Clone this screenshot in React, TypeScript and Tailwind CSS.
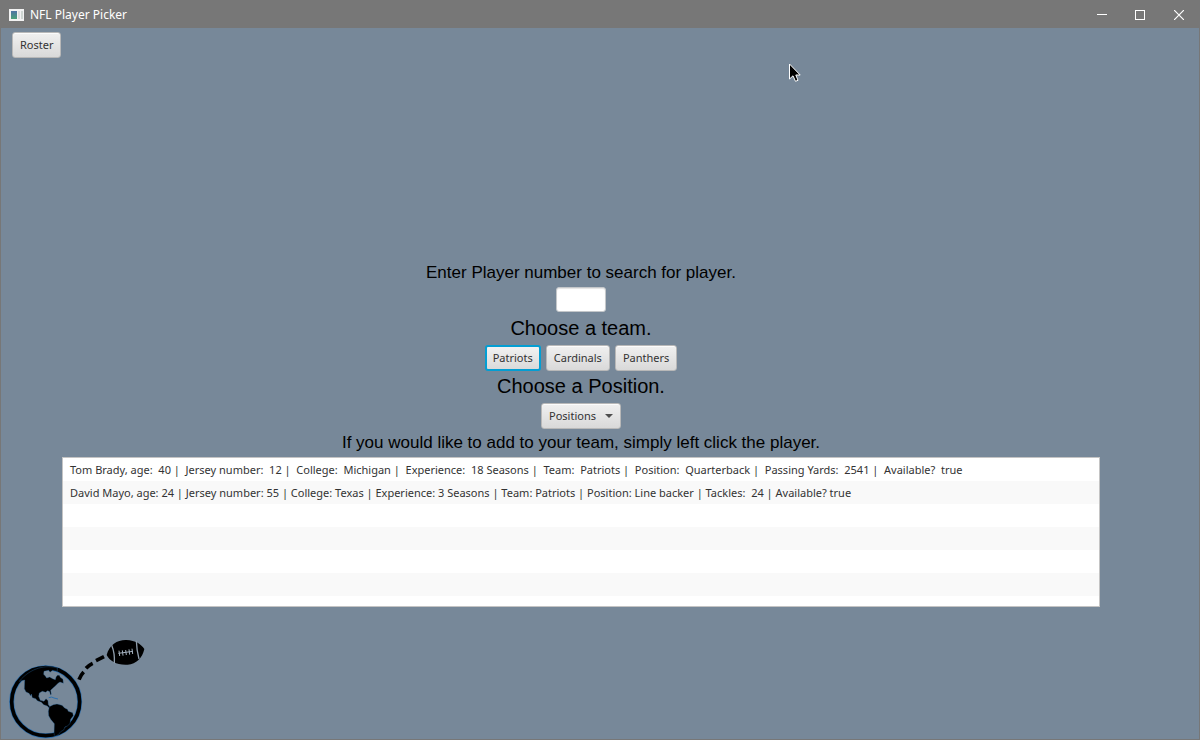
import { useState } from "react";

const teams = ["Patriots", "Cardinals", "Panthers"];

const players = [
  "Tom Brady, age:  40 |  Jersey number:  12 |  College:  Michigan |  Experience:  18 Seasons |  Team:  Patriots |  Position:  Quarterback |  Passing Yards:  2541 |  Available?  true",
  "David Mayo, age: 24 | Jersey number: 55 | College: Texas | Experience: 3 Seasons | Team: Patriots | Position: Line backer | Tackles:  24 | Available? true",
];

const rows = [...players, "", "", "", "", ""];

const control =
  "h-[26px] rounded-[3px] border border-[#b8b8b8] bg-linear-to-b from-[#f0f0f0] to-[#d9d9d9] px-[7px] text-[11px] leading-4 text-[#333333] shadow-[inset_0_1px_0_#fbfbfb]";
const focused =
  "h-[26px] rounded-[3px] border-2 border-[#039ed3] bg-linear-to-b from-[#f2f2f2] to-[#dadada] px-[6px] text-[11px] leading-4 text-[#333333]";

function TitleBar() {
  return (
    <header className="flex h-[27px] items-center bg-[#777777] pl-2 text-white">
      <svg className="mr-[6px] h-3 w-[15px]" viewBox="0 0 15 12" aria-hidden="true">
        <defs>
          <linearGradient id="pane" x1="0" y1="0" x2="0" y2="1">
            <stop offset="0" stopColor="#4f73a5" />
            <stop offset="1" stopColor="#4aa177" />
          </linearGradient>
        </defs>
        <rect width="15" height="12" fill="#f2f2f2" />
        <rect x="2" y="2" width="6" height="8" fill="url(#pane)" />
        <rect x="9" y="2" width="2" height="8" fill="#dcdcdc" />
        <rect x="12" y="2" width="2" height="8" fill="#cfd6d2" />
      </svg>
      <h1 className="flex-1 font-['Noto_Sans','Open_Sans',sans-serif] text-xs">NFL Player Picker</h1>
      <button aria-label="Minimize" className="flex h-full w-[38px] items-center justify-center">
        <svg className="size-[10px]" viewBox="0 0 10 10" shapeRendering="crispEdges">
          <path d="M0 4.5H10" stroke="white" />
        </svg>
      </button>
      <button aria-label="Maximize" className="flex h-full w-[38px] items-center justify-center">
        <svg className="size-[10px]" viewBox="0 0 10 10" shapeRendering="crispEdges">
          <path d="M.5 .5H9.500V9.500H.5Z" fill="none" stroke="white" />
        </svg>
      </button>
      <button aria-label="Close" className="flex h-full w-[40px] items-center justify-center">
        <svg className="size-[10px]" viewBox="0 0 10 10">
          <path d="M0 0L10 10M10 0L0 10" stroke="white" strokeWidth="1.200" />
        </svg>
      </button>
    </header>
  );
}

function GlobeLogo() {
  return (
    <svg className="h-[109px] w-[159px]" viewBox="3 0 477 327" role="img" aria-label="Globe and football">
      <g stroke="#2c6fae" strokeWidth="1" strokeLinejoin="round">
        <circle cx="137" cy="215" r="102" fill="none" stroke="#2c6fae" strokeWidth="15" />
        <circle cx="137" cy="215" r="102" fill="none" stroke="black" strokeWidth="11" />
        <path
          d="M58 154L74 150L73 176L78 186L87 190L92 198L94 192L97 203L107 206L112 212L124 217L131 224L142 228L148 235L153 233L145 224L144 212L138 206L132 214L121 211L116 199L118 189L127 184L137 187L143 182L149 185L151 194L154 193L152 181L160 173L166 168L174 160L180 156L190 160L189 148L181 142L178 136L172 136L168 141L166 149L158 146L149 141L140 144L136 138L131 133L132 124L146 121L150 127L158 121L172 124L172 114C140 104 92 112 58 154Z"
          fill="black"
        />
        <path
          d="M148 230L160 224L171 222L186 226L194 234L202 238L205 244L218 248L220 257L212 268L210 281L202 288L195 291L191 300L182 305L176 313L167 318L162 314L163 281L152 268L146 257L145 244Z"
          fill="black"
        />
        <path d="M146 203Q156 199 162 204L174 207" fill="none" strokeWidth="3" />
      </g>
      <path d="M237 149Q243 134 251 126M258 115Q267 105 278 100M288 92L312 80" fill="none" stroke="black" strokeWidth="11" />
      <path d="M320 75C328 44 353 29 379 30C407 31 424 43 433 57C427 84 409 102 383 104C351 106 329 93 320 75Z" fill="black" />
      <path d="M335 46Q345 70 343 100M409 32Q410 61 417 87" fill="none" stroke="#8f9dab" strokeWidth="4" />
      <path d="M355 70L399 64M357 62L359 78M367 61L369 77M377 60L379 75M387 58L389 74M396 56L398 72" fill="none" stroke="#a3b0bd" strokeWidth="3" />
    </svg>
  );
}

export default function App() {
  const [team, setTeam] = useState("Patriots");
  return (
    <div className="relative flex min-h-screen flex-col border border-[#777777] bg-[#778899] font-['Noto_Sans','Open_Sans',sans-serif]">
      <TitleBar />
      <nav className="flex px-[11px] pt-1">
        <button className={control}>Roster</button>
      </nav>

      <main className="mr-[99px] ml-[61px] flex flex-1 flex-col items-center justify-end pb-[23px] font-['Liberation_Sans',Arial,sans-serif] text-black">
        <label htmlFor="number" className="mb-[3px] text-[17px] leading-[22px]">
          Enter Player number to search for player.
        </label>
        <input
          id="number"
          className="h-[25px] w-[50px] rounded-[3px] border border-[#c4c7ca] bg-white px-[6px] text-[11px] shadow-[inset_0_1px_1px_#e4e4e4]"
        />
        <h2 className="mt-1 mb-1 text-xl leading-[25px]">Choose a team.</h2>
        <div className="flex gap-[5px] font-['Noto_Sans','Open_Sans',sans-serif]">
          {teams.map((name) => (
            <button
              key={name}
              aria-pressed={team === name}
              onClick={() => setTeam(name)}
              className={team === name ? focused : control}
            >
              {name}
            </button>
          ))}
        </div>
        <label htmlFor="position" className="mt-[3px] mb-1 text-xl leading-[25px]">
          Choose a Position.
        </label>
        <div className="relative flex font-['Noto_Sans','Open_Sans',sans-serif]">
          <select id="position" className={`${control} w-20 appearance-none`}>
            <option>Positions</option>
            <option>Quarterback</option>
            <option>Line backer</option>
          </select>
          <svg className="pointer-events-none absolute top-[11px] right-2 h-1 w-2" viewBox="0 0 8 4" aria-hidden="true">
            <path d="M0 0H8L4 4Z" fill="#4d4d4d" />
          </svg>
        </div>
        <h2 className="my-[3px] text-[17px] leading-[22px]">
          If you would like to add to your team, simply left click the player.
        </h2>
        <ul className="h-[150px] w-full overflow-hidden border border-[#c4c4c4] bg-white font-['Noto_Sans','Open_Sans',sans-serif] text-[11px] text-[#333333]">
          {rows.map((row, i) => (
            <li key={i} className="h-[23px] odd:bg-white even:bg-[#f9f9f9]">
              {row && (
                <button className="h-full w-full px-[7px] text-left leading-[23px] whitespace-pre">{row}</button>
              )}
            </li>
          ))}
        </ul>
      </main>

      <footer>
        <GlobeLogo />
      </footer>

      <svg className="pointer-events-none absolute top-[62px] left-[788px] h-[19px] w-3" viewBox="0 0 12 19" aria-hidden="true">
        <path
          d="M.5 1L.5 16L4 12.800L6.500 18.300L9 17.300L6.800 12H11.200Z"
          fill="black"
          stroke="white"
          strokeWidth="1"
        />
      </svg>
    </div>
  );
}
